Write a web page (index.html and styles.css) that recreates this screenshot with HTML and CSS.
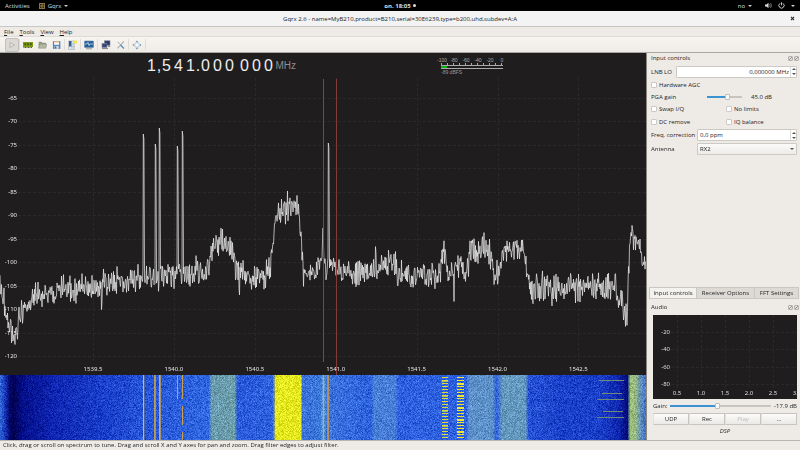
FILE: index.html
```html
<!DOCTYPE html>
<html lang="en">
<head>
<meta charset="utf-8">
<title>Gqrx 2.6</title>
<link rel="stylesheet" href="styles.css">
</head>
<body>
<header class="shell">
  <nav class="shell-left">
    <button class="shell-btn">Activities</button>
    <button class="shell-btn"><svg class="app-icon" viewBox="0 0 6 6"><rect width="6" height="6" fill="#8a7440"/><rect x="1" y="1" width="4" height="4" fill="#2a2418"/><path d="M1 3h4M3 1v4" stroke="#c9a64c" stroke-width=".6"/></svg>Gqrx <i class="caret"></i></button>
  </nav>
  <div class="clock">on. 18:05 <i class="dot"></i></div>
  <div class="shell-right">
    <button class="shell-btn">no <i class="caret"></i></button>
    <svg class="tray volume" viewBox="0 0 7 7"><path d="M0 2.5h1.5L3.5.8v5.4L1.5 4.5H0z" fill="#ddd"/><path d="M4.5 2q1 1.5 0 3M5.6 1q1.8 2.5 0 5" fill="none" stroke="#999" stroke-width=".7"/></svg>
    <svg class="tray" viewBox="0 0 7 7"><path d="M2 1.4a2.6 2.6 0 1 0 3 0M3.5.3v3" fill="none" stroke="#ddd" stroke-width=".9"/></svg>
    <i class="caret"></i>
  </div>
</header>
<div class="titlebar">
  <h1>Gqrx 2.6 - name=MyB210,product=B210,serial=30E6239,type=b200,uhd,subdev=A:A</h1>
  <button class="close" aria-label="Close"><svg viewBox="0 0 5 5"><path d="M1 1l3 3M4 1L1 4" stroke="#333" stroke-width="1.1"/></svg></button>
</div>
<nav class="menubar">
  <button><u>F</u>ile</button><button><u>T</u>ools</button><button><u>V</u>iew</button><button><u>H</u>elp</button>
</nav>
<div class="toolbar">
  <button class="tool pressed" aria-label="Start"><svg viewBox="0 0 10 10"><path d="M3 2.5L7.5 5 3 7.5z" fill="#e4e2df" stroke="#aaa8a5" stroke-width=".7"/></svg></button>
  <span class="sep"></span>
  <button class="tool" aria-label="Hardware"><svg viewBox="0 0 10 10"><path d="M0 2h10v5H0z" fill="#7d9a16"/><path d="M1.5 3.2h1.6v2H1.5zM4.2 3.2h1.6v2H4.2zM7 3.2h1.6v2H7z" fill="#3c4d12"/><path d="M.5 7.5h9" stroke="#545f20" stroke-width="1" stroke-dasharray="1 .5"/></svg></button>
  <button class="tool" aria-label="Open"><svg viewBox="0 0 10 10"><path d="M.7 1.5h3l1 1h4v5.8h-8z" fill="#8f9a85"/><path d="M2 4h8L8.6 8.6H.8z" fill="#b1b9a4" stroke="#7f8975" stroke-width=".5"/></svg></button>
  <button class="tool" aria-label="Save"><svg viewBox="0 0 10 10"><path d="M1 .8h8.3v8.5H1z" fill="#5484b8"/><path d="M2.3 1h5.6v3.8H2.3z" fill="#f8f8f8"/><path d="M2.3 1h5.6v1H2.3z" fill="#dd9257"/><path d="M2.8 6h4.8v3.2H2.8z" fill="#ccd5df"/><path d="M3.4 6.6h1.3v2.3H3.4z" fill="#356192"/></svg></button>
  <span class="sep"></span>
  <button class="tool bookmark" aria-label="Bookmarks"><svg viewBox="0 0 10 10"><path d="M.5 1h5.8v8.5H.5z" fill="#e3e9ef" stroke="#9eabb9" stroke-width=".6"/><path d="M1 1h2.5v6.2L2.2 6 1 7.2z" fill="#385f8d"/><path d="M4 3.5h2M4 5h2M4 6.5h2M3 8h3" stroke="#92a6bc" stroke-width=".5"/><circle cx="7.6" cy="2" r="1.7" fill="#f4e54c"/></svg></button>
  <span class="sep"></span>
  <button class="tool" aria-label="Remote control"><svg viewBox="0 0 10 10"><rect x=".5" y="1" width="9" height="6.5" rx=".5" fill="#245d94" stroke="#688cad" stroke-width=".6"/><path d="M1 4h2l1-1.6 1 3.2.8-1.6H9" fill="none" stroke="#c9e3f7" stroke-width=".8"/><path d="M2 8.8h6" stroke="#929b9c" stroke-width="1"/></svg></button>
  <span class="sep"></span>
  <button class="tool" aria-label="Network"><svg viewBox="0 0 10 10"><rect x="3.5" y=".8" width="5.5" height="4.5" fill="#29376e" stroke="#85878c" stroke-width=".6"/><rect x="1" y="3.5" width="5" height="4" fill="#374780" stroke="#85878c" stroke-width=".6"/><path d="M1 8.6h6M7.2 6.5h2" stroke="#777" stroke-width=".9"/></svg></button>
  <button class="tool" aria-label="Settings"><svg viewBox="0 0 10 10"><path d="M8.8 1L1.7 8.7" stroke="#a7afb3" stroke-width="1.2"/><path d="M1.8 1.5l3 3" stroke="#9aa0a2" stroke-width="1"/><path d="M5 5l3.8 3.8" stroke="#5c8cba" stroke-width="1.6"/></svg></button>
  <span class="sep"></span>
  <button class="tool" aria-label="Full screen"><svg viewBox="0 0 10 10"><path d="M5 .5l1.6 1.7H3.4zM5 9.5l1.6-1.7H3.4zM.5 5l1.7-1.6v3.2zM9.5 5L7.8 3.4v3.2z" fill="#7299c4"/><rect x="3" y="3" width="4" height="4" rx="1" fill="#fff" stroke="#9bb1c7" stroke-width=".6"/></svg></button>
  <span class="sep"></span>
</div>
<div class="work">
  <main class="receiver">
    <div class="readout">
      <div class="freq"><b>1</b><s>,</s><b>5</b><b>4</b><b>1</b><s>.</s><b>0</b><b>0</b><b>0</b><s></s><b>0</b><b>0</b><b>0</b><span class="unit">MHz</span></div>
      <div class="meter">
        <div class="meter-scale"><span>-100</span><span>-80</span><span>-60</span><span>-40</span><span>-20</span><span>0</span></div>
        <div class="meter-ticks"></div>
        <div class="meter-bar"><i></i></div>
        <div class="meter-value">-89 dBFS</div>
      </div>
    </div>
    <div class="plot" id="plot"><canvas id="spectrum"></canvas></div>
    <canvas class="waterfall" id="waterfall"></canvas>
  </main>
  <aside class="dock">
    <section class="inputs">
      <div class="dock-title"><h2>Input controls</h2><span class="dock-icons"><button aria-label="Float"></button><button aria-label="Close"></button></span></div>
      <div class="row"><label for="lnb">LNB LO</label>
        <span class="spin"><input class="right" id="lnb" type="text" value="0,000000 MHz"><span class="steps"><button aria-label="Up"></button><button aria-label="Down"></button></span></span></div>
      <div class="row"><label class="check"><input type="checkbox">Hardware AGC</label></div>
      <div class="row short"><label class="gain-label" for="pga">PGA gain</label><input class="slider pga" id="pga" type="range" min="0" max="76" value="45"><output>45.0 dB</output></div>
      <div class="row pair"><label class="check"><input type="checkbox">Swap I/Q</label><label class="check"><input type="checkbox">No limits</label></div>
      <div class="row pair"><label class="check"><input type="checkbox">DC remove</label><label class="check"><input type="checkbox">IQ balance</label></div>
      <div class="row tall"><label class="wide" for="ppm">Freq. correction</label>
        <span class="spin"><input id="ppm" type="text" value="0,0 ppm"><span class="steps"><button aria-label="Up"></button><button aria-label="Down"></button></span></span></div>
      <div class="row tall"><label class="wide" for="ant">Antenna</label><span class="combo"><select id="ant"><option>RX2</option></select></span></div>
    </section>
    <nav class="tabs"><button class="active">Input controls</button><button>Receiver Options</button><button>FFT Settings</button></nav>
    <section class="audio">
      <div class="dock-title"><h2>Audio</h2><span class="dock-icons"><button aria-label="Float"></button><button aria-label="Close"></button></span></div>
      <div class="audio-body">
        <div class="audio-plot" id="audio"><canvas id="audioGrid"></canvas></div>
        <div class="audio-gain"><label for="again">Gain:</label><input class="slider again" id="again" type="range" min="-80" max="50" value="-19"><output>-17.9 dB</output></div>
        <div class="audio-buttons"><button>UDP</button><button>Rec</button><button disabled>Play</button><button>...</button></div>
        <p class="dsp">DSP</p>
      </div>
    </section>
  </aside>
</div>
<footer class="status">Click, drag or scroll on spectrum to tune. Drag and scroll X and Y axes for pan and zoom. Drag filter edges to adjust filter.</footer>
<script src="plots.js"></script>
</body>
</html>
```
FILE: styles.css
```css
* { box-sizing: border-box; }
html, body { height: 100%; margin: 0; }
body {
  display: flex;
  flex-direction: column;
  background: #eeebe7;
  color: #1c2022;
  font: 6px/8px "Open Sans", "Noto Sans", sans-serif;
  overflow: hidden;
}
button, input, select { font: inherit; color: inherit; margin: 0; padding: 0; border: 0; background: none; }
h1, h2, p { margin: 0; font-size: inherit; font-weight: normal; }
canvas { display: block; }

.shell { display: grid; grid-template-columns: 1fr auto 1fr; align-items: center; height: 11px; padding: 0 5px; background: #000; color: #ddd; }
.shell-left, .shell-right { display: flex; align-items: center; gap: 9px; }
.shell-right { justify-content: flex-end; gap: 6px; }
.shell-btn { display: flex; align-items: center; gap: 3px; }
.clock { display: flex; align-items: center; gap: 2px; font-weight: bold; }
.dot { width: 3px; height: 3px; border-radius: 50%; background: #ddd; }
.caret { border: 2px solid transparent; border-top-color: #ccc; border-bottom: 0; }
.app-icon { width: 6px; height: 6px; }
.tray { width: 7px; height: 7px; }
.volume { margin-left: 7px; }

.titlebar { display: grid; grid-template-columns: 1fr auto 1fr; align-items: center; height: 16px; padding: 0 5px; background: #f3f3f3; border-bottom: 1px solid #c9c7c4; }
.titlebar h1 { grid-column: 2; font-weight: 500; }
.close { justify-self: end; display: flex; }
.close svg { width: 5px; height: 5px; }

.menubar { display: flex; align-items: center; gap: 6px; height: 10px; padding: 0 4px; border-bottom: 1px solid #dedbd7; }
.toolbar { display: flex; align-items: center; gap: 4px; height: 16px; padding: 0 5px; background: linear-gradient(#f7f5f1, #efece7); border-bottom: 1px solid #aaa6a1; }
.tool { display: flex; align-items: center; justify-content: center; width: 10px; height: 14px; }
.tool svg { width: 10px; height: 10px; }
.tool + .tool svg { width: 9px; }
.pressed { width: 14px; margin-right: -3px; background: #dbd9d6; border: 1px solid #c4c1bd; border-radius: 2px; }
.bookmark { margin-right: -2px; }
.sep { width: 1px; height: 11px; margin: 0 -1px; background: #dfdcd8; }
.bookmark + .sep { margin-left: 0; }

.work { flex: 1; display: flex; min-height: 0; }
.receiver { flex: 1; display: flex; flex-direction: column; min-width: 0; background: #1f1d1e; border-right: 1px solid #8b8781; }
.readout { display: grid; grid-template-columns: 441fr 62px 143fr; height: 25px; padding-top: 3px; color: #eee; }
.freq { display: flex; align-items: center; justify-content: flex-end; height: 20px; padding-right: 145px; font: 16px/20px "Liberation Sans", sans-serif; }
.freq b { width: 12px; text-align: center; font-weight: normal; }
.freq s { width: 3px; display: flex; justify-content: center; text-decoration: none; }
.unit { padding-left: 1px; font-size: 10px; color: #8d8d8d; }
.meter { color: #aaa; font: 5px/6px "Liberation Sans", sans-serif; padding-top: 1px; }
.meter-scale { display: flex; justify-content: space-between; margin: 0 -5px; }
.meter-scale span { flex: 0 0 12px; text-align: center; }
.meter-ticks { height: 2px; background: repeating-linear-gradient(90deg, #aaa 0 1px, transparent 1px 6px); }
.meter-bar { height: 4px; border: solid #aaa; border-width: 1px 0; }
.meter-bar i { display: block; width: 10%; height: 2px; background: #00b400; }
.meter-value { color: #999; }

.plot { position: relative; flex: 1; min-height: 0; color: #e6e6e6; line-height: 8px; }
.plot, .audio-plot { font-family: "Noto Sans", sans-serif; }
.plot canvas, .audio-plot canvas { position: absolute; inset: 0; width: 100%; height: 100%; }
.tick-x, .tick-y { position: absolute; }
.tick-x { bottom: 2px; transform: translateX(-50%); }
.tick-y { left: 0; width: 17px; text-align: right; transform: translateY(-50%); }
.waterfall { width: 100%; height: 65px; flex: none; }

.dock { width: 153px; flex: none; display: flex; flex-direction: column; }
.inputs { flex: 1; padding: 0 3px 0 4px; }
.dock-title { display: flex; justify-content: space-between; align-items: center; height: 10px; }
.dock-icons { display: flex; gap: 1px; margin-right: -2px; }
.dock-icons button { width: 5px; height: 5px; border: 1px solid #b5b2af; border-radius: 1px; background: linear-gradient(135deg, #ddd 40%, #999 40% 60%, #ddd 60%); }
.row { display: flex; align-items: center; gap: 4px; height: 13px; }
.inputs .row:nth-child(2) { margin-top: 2px; }
.row.short { height: 11px; gap: 5px; }
.row.tall { height: 14px; gap: 0; }
.wide { width: 46px; }
.check { display: flex; align-items: center; gap: 2px; }
.row.pair { display: grid; grid-template-columns: 71px 1fr; }
input[type="checkbox"] { appearance: none; width: 6px; height: 6px; background: #fff; border: 1px solid #cdcac6; border-radius: 1px; }
.spin, .combo { flex: 1; display: flex; height: 12px; border: 1px solid #cdc9c4; border-radius: 1px; background: #fff; }
.spin input { flex: 1; min-width: 0; padding: 0 2px; }
.spin .right { text-align: right; padding-right: 1px; }
.steps { display: flex; flex-direction: column; justify-content: center; gap: 3px; width: 6px; border-left: 1px solid #ddd; padding-left: 1px; }
.steps button { width: 4px; height: 2px; border: 2px solid transparent; border-top: 0; border-bottom-color: #555; }
.steps button + button { border-top: 2px solid #555; border-bottom: 0; }
.combo { position: relative; background: linear-gradient(#fbfaf9, #edebe8); }
.combo select { flex: 1; appearance: none; padding: 0 2px; }
.combo::after { content: ""; position: absolute; right: 2px; top: 4px; border: 2px solid transparent; border-top-color: #555; border-bottom: 0; }
.gain-label { width: 51px; }
.pga { width: 35px; --fill: 58%; }
.row output { padding-left: 4px; }

.slider { appearance: none; height: 8px; background: linear-gradient(90deg, #3b93d2 var(--fill), #c8c5c1 var(--fill)) center / 100% 2px no-repeat; }
.slider::-webkit-slider-thumb { appearance: none; width: 5px; height: 6px; background: #fafafa; border: 1px solid #c1beb9; border-radius: 1px; }

.tabs { display: grid; grid-template-columns: 48px 58px 44px; height: 12px; padding-left: 2px; }
.tabs button { background: #dddad6; border: 1px solid #cbc8c4; border-left-width: 0; white-space: nowrap; }
.tabs .active { background: #f4f2ef; border-left-width: 1px; }
.audio { padding: 3px 3px 3px 4px; }
.audio-body { padding-left: 2px; }
.audio-plot { position: relative; height: 84px; margin-top: 3px; background: #1f1d1e; color: #ddd; overflow: hidden; }
.audio-gain { display: flex; align-items: center; gap: 3px; height: 14px; }
.again { flex: 1; min-width: 0; --fill: 47%; }
.audio-buttons { display: grid; grid-template-columns: repeat(4, 1fr); height: 12px; }
.audio-buttons button { border: 1px solid #c8c5c0; border-left-color: #e4e2df; background: linear-gradient(#fbfbfa, #ebe9e6); }
.audio-buttons button:disabled { color: #bbb; }
.dsp { height: 12px; padding-top: 2px; text-align: center; font-style: italic; }
.status { flex: none; height: 10px; padding: 0 3px; border-top: 1px solid #b9b5b0; }
```
FILE: plots.js
```js
// Small seeded generator so every load draws the same noise.
let seed = 20417;
function rnd() {
  seed = (seed * 1664525 + 1013904223) >>> 0;
  return seed / 4294967296;
}
const gauss = () => (rnd() + rnd() + rnd() - 1.5) / 0.75;

// Horizontal scale: the level tables below use a span of 646 units.
const SPAN = 646;

function interp(table, x) {
  let i = 1;
  while (i < table.length - 1 && table[i][0] < x) i++;
  const a = table[i - 1], b = table[i];
  const t = Math.min(1, Math.max(0, (x - a[0]) / (b[0] - a[0])));
  return a.slice(1).map((v, k) => v + (b[k + 1] - v) * t);
}

function fit(canvas) {
  canvas.width = canvas.clientWidth;
  canvas.height = canvas.clientHeight;
  return canvas.getContext("2d");
}

function label(host, cls, text, prop, pct) {
  const el = document.createElement("span");
  el.className = cls;
  el.textContent = text;
  el.style[prop] = pct + "%";
  host.appendChild(el);
}

function grid(ctx, xs, ys, bottom) {
  ctx.strokeStyle = "#2a2829";
  ctx.lineWidth = 1;
  ctx.setLineDash([3, 2]);
  ctx.beginPath();
  xs.forEach(x => { ctx.moveTo(Math.round(x) + 0.5, 0); ctx.lineTo(Math.round(x) + 0.5, bottom); });
  ys.forEach(y => { ctx.moveTo(18, Math.round(y) + 0.5); ctx.lineTo(ctx.canvas.width, Math.round(y) + 0.5); });
  ctx.stroke();
  ctx.setLineDash([]);
}

// Mean trace height, in units of a 297-high plot.
const trace = [[0,206],[4,222],[8,245],[12,258],[16,252],[22,232],[30,227],[36,214],[45,216],[60,214],[75,211],[90,208],[110,206],[130,201],[150,199],[180,196],[200,194],[209,190],[211,168],[216,165],[232,167],[236,190],[245,200],[260,200],[270,193],[272,172],[275,138],[285,130],[298,128],[301,162],[303,190],[310,196],[318,189],[322,180],[323,152],[324,182],[327,189],[345,193],[370,197],[373,186],[394,185],[397,196],[410,197],[440,199],[442,173],[446,173],[448,198],[456,190],[459,182],[463,187],[465,200],[468,184],[472,172],[485,172],[492,180],[494,198],[500,194],[502,173],[510,171],[524,171],[528,198],[532,214],[545,209],[570,207],[600,209],[615,208],[619,224],[626,230],[627,246],[629,180],[631,151],[635,162],[640,170],[646,192]];
const carriers = [[143,56],[155,66],[159,50],[177,68],[182,53],[328,65]];

const plot = document.getElementById("plot");
const freqs = [1539.5, 1540, 1540.5, 1541, 1541.5, 1542, 1542.5];
const xOf = f => 93 + (f - 1539.5) * 161.8;
const levels = [];
for (let d = -65; d >= -120; d -= 5) levels.push(d);
const yOf = d => 20 + (-65 - d) * 4.69;
freqs.forEach(f => label(plot, "tick-x", f.toFixed(1), "left", xOf(f) / SPAN * 100));
levels.forEach(d => label(plot, "tick-y", d, "top", yOf(d) / 297 * 100));

function drawSpectrum() {
  const ctx = fit(document.getElementById("spectrum"));
  const w = ctx.canvas.width, h = ctx.canvas.height;
  const sx = w / SPAN, sy = h / 297;
  grid(ctx, freqs.map(f => xOf(f) * sx), levels.map(d => yOf(d) * sy), 284 * sy);
  ctx.strokeStyle = "rgba(235,235,235,.9)";
  ctx.lineWidth = 0.8;
  ctx.lineJoin = "bevel";
  ctx.beginPath();
  for (let x = 0; x < SPAN; x += 0.5) {
    let n = gauss() * 10;
    if (rnd() < 0.04) n += 24 * (rnd() - 0.35);
    if (x > 321 && x < 325) n *= 0.3;
    const y = interp(trace, x)[0] + n;
    ctx.lineTo(x * sx, y * sy);
    const peak = carriers.find(c => c[0] === x);
    if (peak) {
      ctx.lineTo((x + 0.3) * sx, peak[1] * sy);
      ctx.lineTo((x + 0.9) * sx, (peak[1] + 5) * sy);
      ctx.lineTo((x + 1.5) * sx, 190 * sy);
      x += 1;
    }
  }
  ctx.stroke();
  ctx.fillStyle = "#55555c";
  ctx.fillRect(Math.round(323 * sx), 1, 1, 283 * sy);
  ctx.fillStyle = "#843c38";
  ctx.fillRect(Math.round(336 * sx), 1, 1, h);
}

// Waterfall colours by position: x, r, g, b.
const heat = [[0,48,100,215],[5,20,50,180],[9,2,8,110],[13,0,0,80],[22,3,14,135],[50,14,36,175],[100,24,60,200],[140,36,82,215],[200,46,100,222],[208,46,100,222],[211,105,155,175],[234,108,158,172],[237,42,90,218],[272,46,96,220],[274,130,160,120],[275,228,232,30],[300,228,232,30],[302,58,112,218],[320,60,120,218],[323,110,165,200],[326,60,115,220],[370,46,98,222],[374,72,126,215],[394,72,126,215],[398,46,96,222],[440,46,96,222],[465,46,96,220],[469,92,144,200],[492,92,144,200],[496,46,96,220],[502,100,152,190],[525,100,152,190],[528,38,82,212],[560,26,64,202],[600,26,62,200],[618,14,38,175],[627,2,10,120],[628,60,90,130],[630,155,190,120],[635,150,185,130],[640,100,145,185],[646,60,110,210]];

function drawWaterfall() {
  const ctx = fit(document.getElementById("waterfall"));
  const w = ctx.canvas.width, h = ctx.canvas.height, sx = w / SPAN;
  const img = ctx.createImageData(w, h);
  for (let x = 0; x < w; x++) {
    const c = interp(heat, x / sx);
    for (let y = 0; y < h; y++) {
      const n = gauss(), o = (y * w + x) * 4;
      const k = Math.min(1, 0.35 + c[1] / 120);
      img.data[o] = c[0] + n * 21 * k;
      img.data[o + 1] = c[1] + n * 24 * k;
      img.data[o + 2] = c[2] + n * (c[0] > 80 ? 28 : 22);
      img.data[o + 3] = 255;
    }
  }
  ctx.putImageData(img, 0, 0);
  const bar = (x, y, bw, bh, color) => { ctx.fillStyle = color; ctx.fillRect(Math.round(x * sx), y, bw, bh); };
  bar(143, 0, 1, h, "#f2b53c"); bar(144, 0, 1, h, "#51629a");
  bar(154, 0, 1, h, "#b79a5c"); bar(155, 0, 1, h, "#a3936c");
  bar(159, 0, 1, h, "#d8aa4a"); bar(160, 0, 1, h, "#a0946f");
  bar(177, 0, 1, 24, "#c7a04e");
  [[0,24],[31,19],[57,8]].forEach(([y, bh]) => bar(182, y, 1, bh, "#c7a04e"));
  bar(323, 0, 1, h, "#8fbd9c");
  bar(327, 0, 1, h, "#8994a0"); bar(328, 0, 1, h, "#b2935c");
  for (let y = 2; y < h; y += 3) {
    bar(442, y, 6, 1, "#dcdc38");
    bar(457, y, 7, 1, "#f2e824");
    if (y % 4 === 0) bar(457, y + 1, 7, 1, "#f2e824");
    if (y % 5 === 0) bar(442, y + 1, 6, 1, "#aabb68");
  }
  [[599,5,25],[602,18,20],[598,24,26],[603,36,20],[597,42,27]].forEach(([x, y, bw]) => bar(x, y, bw, 1, "#6f8a78"));
}

const audio = document.getElementById("audio");
const audioX = [0.5, 1, 1.5, 2, 2.5, 3], audioY = [-20, -40, -60, -80];
const axOf = v => 24 * v * 2, ayOf = v => 17 + (-20 - v) * 0.87;
audioX.forEach(v => label(audio, "tick-x", v.toFixed(1), "left", axOf(v) / 144 * 100));
audioY.forEach(v => label(audio, "tick-y", v, "top", ayOf(v) / 84 * 100));

function drawAudio() {
  const ctx = fit(document.getElementById("audioGrid"));
  const sx = ctx.canvas.width / 144;
  grid(ctx, audioX.map(v => axOf(v) * sx), audioY.map(ayOf), 74);
}

function drawAll() { seed = 20417; drawSpectrum(); drawWaterfall(); drawAudio(); }
window.addEventListener("resize", drawAll);
drawAll();
```
